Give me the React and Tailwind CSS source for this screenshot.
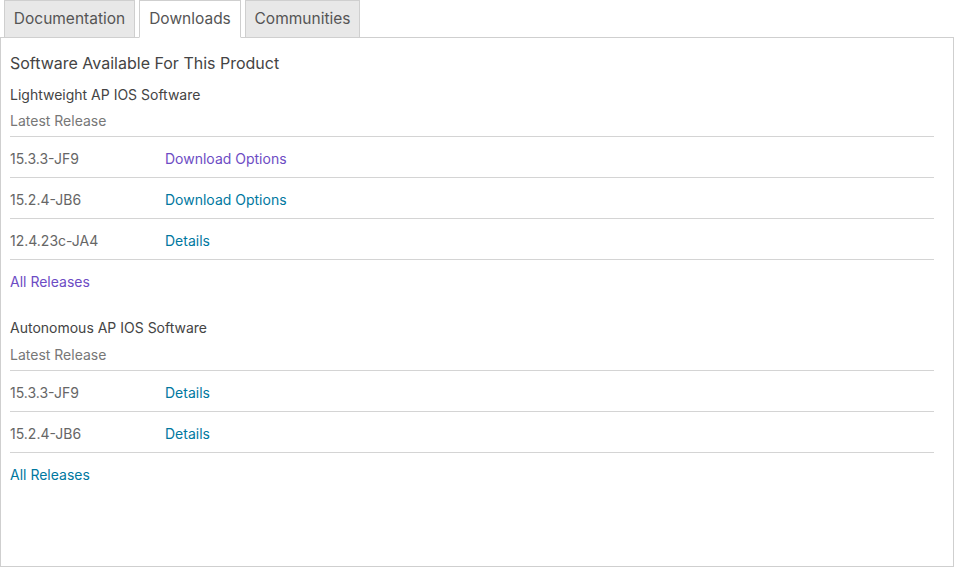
import React from "react";

const tabs = [
  { label: "Documentation", w: "w-[131px]" },
  { label: "Downloads", w: "w-[102px]", active: true },
  { label: "Communities", w: "w-[115px]" },
];

const sections = [
  {
    title: "Lightweight AP IOS Software",
    rows: [
      { version: "15.3.3-JF9", label: "Download Options", visited: true },
      { version: "15.2.4-JB6", label: "Download Options" },
      { version: "12.4.23c-JA4", label: "Details" },
    ],
    allVisited: true,
  },
  {
    title: "Autonomous AP IOS Software",
    rows: [
      { version: "15.3.3-JF9", label: "Details" },
      { version: "15.2.4-JB6", label: "Details" },
    ],
  },
];

const Section = ({ section, first }) => (
  <div className={first ? "mt-[12px]" : "mt-[17px]"}>
    <div className="h-[20px] leading-[20px] pt-px text-[14px] text-[#444]">{section.title}</div>
    <div
      className={
        "h-[27px] leading-[20px] pt-px text-[14px] text-[#777] border-b border-[#d4d4d4] " +
        (first ? "mt-[6px]" : "mt-[7px]")
      }
    >
      Latest Release
    </div>
    {section.rows.map((r) => (
      <div
        key={r.version + r.label}
        className="h-[41px] pt-[2px] flex items-center border-b border-[#d4d4d4] text-[14px]"
      >
        <span className="w-[155px] text-[#666]">{r.version}</span>
        <a className={r.visited ? "text-[#6d4cc4]" : "text-[#00789f]"}>{r.label}</a>
      </div>
    ))}
    <div className="h-[40px] pt-[2px] flex items-center text-[14px]">
      <a className={section.allVisited ? "text-[#6d4cc4]" : "text-[#00789f]"}>All Releases</a>
    </div>
  </div>
);

export default function App() {
  return (
    <div
      className="w-[954px] h-[567px] bg-white"
      style={{ fontFamily: "Inter, Roboto, 'Liberation Sans', sans-serif" }}
    >
      <div className="flex pl-[4px] gap-[4px] h-[37px] items-end">
        {tabs.map((t) => (
          <div
            key={t.label}
            className={
              "h-[37px] flex items-center justify-center text-[15.5px] text-[#555] border border-[#cfcfcf] " +
              t.w +
              (t.active ? " bg-white border-b-white relative z-10 h-[38px] -mb-px" : " bg-[#e8e8e8] border-b-0")
            }
          >
            {t.label}
          </div>
        ))}
      </div>
      <div className="h-[530px] border border-[#cfcfcf] pl-[9px] pr-[19px] pt-[14px]">
        <div className="h-[20px] leading-[20px] pt-px text-[16px] text-[#444]">
          Software Available For This Product
        </div>
        {sections.map((s, i) => (
          <Section key={s.title} section={s} first={i === 0} />
        ))}
      </div>
    </div>
  );
}
